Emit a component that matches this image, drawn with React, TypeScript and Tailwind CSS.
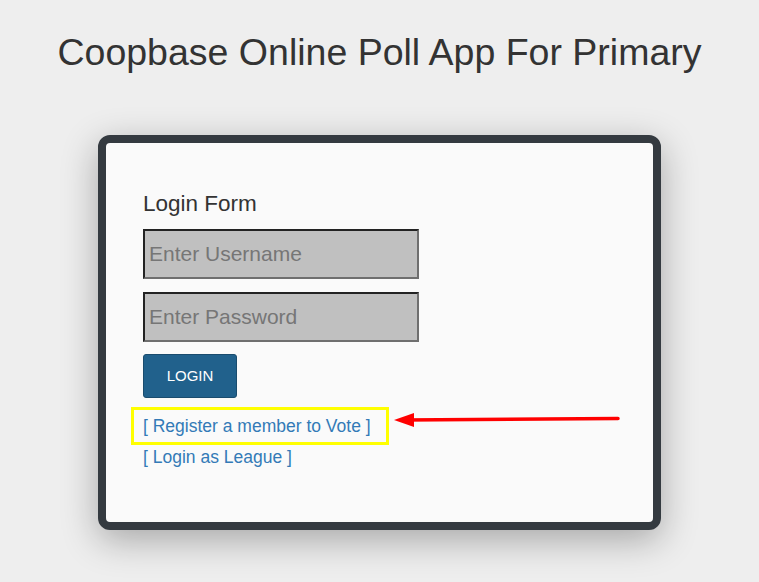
export default function App() {
  return (
    <div className="min-h-[582px] w-full bg-[#eeeeee] font-['Liberation_Sans',Arial,sans-serif] pt-[28px]">
      <h1 className="text-center text-[37.5px] leading-[48px] text-[#333333]">
        Coopbase Online Poll App For Primary
      </h1>

      <div className="relative mx-auto mt-[59px] w-[563px] h-[395px] rounded-[12px] border-[8px] border-[#343a40] bg-[#fafafa] shadow-[0_10px_36px_rgba(0,0,0,0.3)]">
        <div className="pl-[37px] pt-[49px]">
          <h2 className="text-[22.5px] leading-[24px] text-[#333333]">Login Form</h2>

          <input
            type="text"
            placeholder="Enter Username"
            className="mt-[13px] block h-[50px] w-[276px] border-2 border-t-[#222222] border-l-[#222222] border-b-[#6f6f6f] border-r-[#6f6f6f] bg-[#c0c0c0] px-[4px] text-[21px] text-[#333] placeholder:text-[#767676] outline-none"
          />

          <input
            type="password"
            placeholder="Enter Password"
            className="mt-[13px] block h-[50px] w-[276px] border-2 border-t-[#222222] border-l-[#222222] border-b-[#6f6f6f] border-r-[#6f6f6f] bg-[#c0c0c0] px-[4px] text-[21px] text-[#333] placeholder:text-[#767676] outline-none"
          />

          <button className="mt-[12px] block h-[44px] w-[94px] rounded-[3px] border border-[#1a4c6e] bg-[#21618c] text-[15px] text-white">
            LOGIN
          </button>

          <div className="mt-[9px] -ml-[12px] w-fit border-[3px] border-[#ffff00] pl-[9px] pr-[15px] py-[5px]">
            <a href="#" className="block text-[17.5px] leading-[22px] text-[#337ab7]">
              [ Register a member to Vote ]
            </a>
          </div>
          <a href="#" className="mt-[1px] block w-fit text-[17.5px] leading-[22px] text-[#337ab7]">
            [ Login as League ]
          </a>
        </div>

        {/* annotation arrow */}
        <svg className="absolute left-[286px] top-[266px]" width="230" height="22" viewBox="0 0 230 22">
          <path d="M12 11 L226 9.5" stroke="#ff0000" strokeWidth="3.5" strokeLinecap="round" fill="none" />
          <polygon points="2,11 22,4 22,18" fill="#ff0000" />
        </svg>
      </div>
    </div>
  );
}
